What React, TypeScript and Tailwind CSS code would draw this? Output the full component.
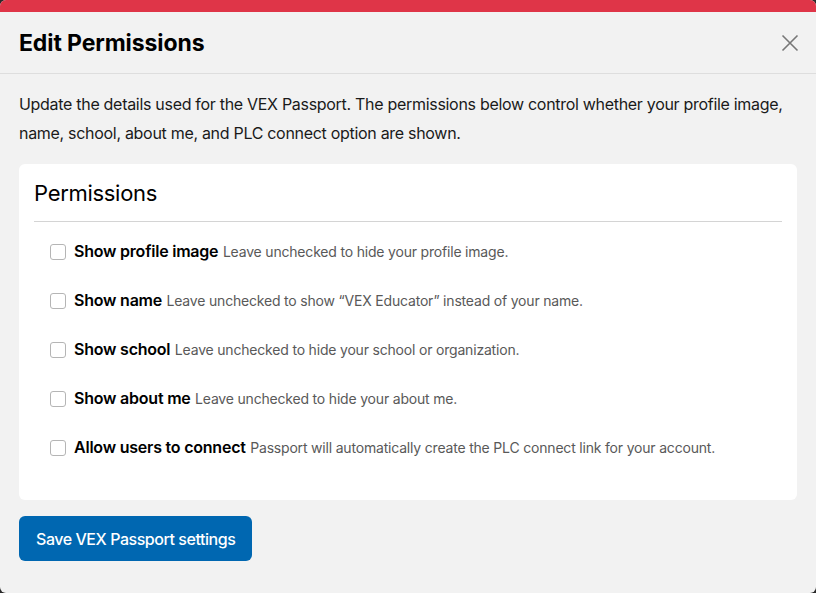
import { useState } from "react";

interface Permission {
  id: string;
  label: string;
  help: string;
}

const permissions: Permission[] = [
  { id: "image", label: "Show profile image", help: "Leave unchecked to hide your profile image." },
  { id: "name", label: "Show name", help: "Leave unchecked to show \u201cVEX Educator\u201d instead of your name." },
  { id: "school", label: "Show school", help: "Leave unchecked to hide your school or organization." },
  { id: "about", label: "Show about me", help: "Leave unchecked to hide your about me." },
  { id: "connect", label: "Allow users to connect", help: "Passport will automatically create the PLC connect link for your account." },
];

const App = () => {
  const [checked, setChecked] = useState<Record<string, boolean>>({});

  return (
    <div
      className="w-[816px] h-[593px] bg-[#2a2a2a] overflow-hidden"
      style={{ fontFamily: "Inter, 'Liberation Sans', sans-serif" }}
    >
      <div className="h-full w-full bg-[#f2f2f2] rounded-[6px] overflow-hidden flex flex-col text-black">
        <div className="h-[12px] bg-[#df3548] shrink-0" />

        {/* Header */}
        <div className="h-[62px] flex items-center justify-between pl-[19px] pr-[16px] border-b border-[#dedede] shrink-0">
          <h2 className="text-[23px] font-bold tracking-[-0.1px] pt-[1px]">Edit Permissions</h2>
          <button className="w-[20px] h-[20px] flex items-center justify-center text-[#777]" aria-label="Close">
            <svg width="18" height="18" viewBox="0 0 18 18" fill="none" stroke="currentColor" strokeWidth="1.6">
              <path d="M1.5 1.5 L16.5 16.5 M16.5 1.5 L1.5 16.5" />
            </svg>
          </button>
        </div>

        {/* Body */}
        <div className="px-[19px] pt-[16px]">
          <p className="text-[16px] leading-[29px] tracking-[-0.3px] text-[#1a1a1a]">
            Update the details used for the VEX Passport. The permissions below control whether your profile image,
            name, school, about me, and PLC connect option are shown.
          </p>

          <div className="mt-[16px] bg-white rounded-[6px] px-[15px] pt-[15px] pb-[28px]">
            <h3 className="text-[22px] leading-[29px] font-normal tracking-[-0.3px] pb-[13px] border-b border-[#d4d4d4]">
              Permissions
            </h3>
            <div className="mt-[5px] flex flex-col">
              {permissions.map((p) => (
                <label key={p.id} className="h-[49px] flex items-center pl-[16px] gap-[8px] cursor-pointer">
                  <input
                    type="checkbox"
                    checked={!!checked[p.id]}
                    onChange={(e) => setChecked({ ...checked, [p.id]: e.target.checked })}
                    className="appearance-none w-[16px] h-[16px] rounded-[3px] border border-[#b5b5b5] bg-white shrink-0 checked:bg-[#0067b1] checked:border-[#0067b1]"
                  />
                  <span className="text-[16px] leading-[24px]">
                    <span className="font-semibold tracking-[-0.22px]">{p.label}</span>{" "}
                    <span className="text-[14px] tracking-[-0.19px] text-[#595959]">{p.help}</span>
                  </span>
                </label>
              ))}
            </div>
          </div>

          <button className="mt-[16px] h-[45px] px-[17px] rounded-[6px] bg-[#0067b1] text-white text-[16px] font-medium tracking-[-0.45px]">
            Save VEX Passport settings
          </button>
        </div>
      </div>
    </div>
  );
};

export default App;
